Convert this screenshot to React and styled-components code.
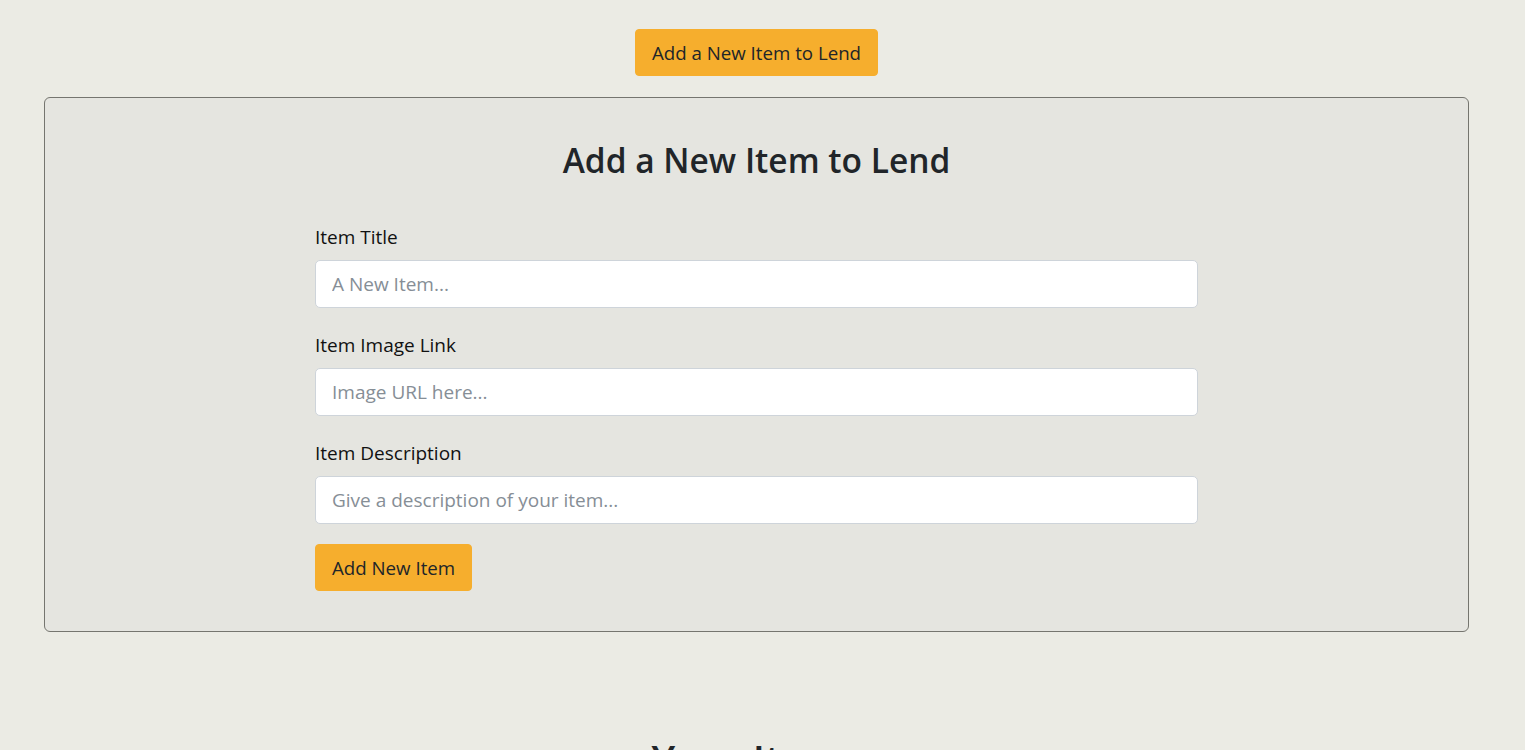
import React from 'react'
import styled, { createGlobalStyle } from 'styled-components'

const GlobalStyle = createGlobalStyle`
  * { box-sizing: border-box; }
  body {
    margin: 0;
    background-color: #ebebe4;
    color: #212529;
    font-family: "Segoe UI", "Open Sans", "Liberation Sans", sans-serif;
  }
`

const Page = styled.div`
  display: flex;
  flex-direction: column;
  align-items: center;
  padding: 29px 56px 0 44px;
`

const OrangeButton = styled.button`
  background-color: #f6ae2d;
  border: 1px solid #f6ae2d;
  border-radius: 4px;
  color: #212529;
  font-family: inherit;
  font-size: 18.7px;
  line-height: 29px;
  padding: 8px 16px;
  cursor: pointer;
  align-self: ${props => (props.left ? 'flex-start' : 'center')};
`

const Card = styled.div`
  width: 100%;
  margin-top: 21px;
  background-color: #e5e5e0;
  border: 1px solid #75756f;
  border-radius: 6px;
  padding: 42px 0 40px;
  display: flex;
  flex-direction: column;
  align-items: center;
`

const CardTitle = styled.h2`
  margin: 0 0 42px;
  font-size: 33.5px;
  font-weight: 600;
  line-height: 40px;
`

const Form = styled.form`
  width: 883px;
  display: flex;
  flex-direction: column;
`

const Field = styled.div`
  display: flex;
  flex-direction: column;
  margin-bottom: 22px;
  &:nth-child(3) {
    margin-bottom: 20px;
  }
`

const Label = styled.label`
  font-size: 19px;
  line-height: 30px;
  margin-bottom: 8px;
  color: #111;
`

const Input = styled.input`
  height: 48px;
  background: #fff;
  border: 1px solid #ced4da;
  border-radius: 5px;
  padding: 8px 16px;
  font-family: inherit;
  font-size: 19px;
  color: #212529;
  &::placeholder {
    color: #868e96;
  }
`

const SectionTitle = styled.h1`
  margin: 104px 0 0;
  font-size: 40px;
  font-weight: 600;
  line-height: 48px;
`

const fields = [
  { label: 'Item Title', placeholder: 'A New Item...' },
  { label: 'Item Image Link', placeholder: 'Image URL here...' },
  { label: 'Item Description', placeholder: 'Give a description of your item...' },
]

function App() {
  return (
    <Page>
      <GlobalStyle />
      <OrangeButton>Add a New Item to Lend</OrangeButton>
      <Card>
        <CardTitle>Add a New Item to Lend</CardTitle>
        <Form onSubmit={e => e.preventDefault()}>
          {fields.map((f, i) => (
            <Field key={i}>
              <Label>{f.label}</Label>
              <Input placeholder={f.placeholder} />
            </Field>
          ))}
          <OrangeButton left type="submit">Add New Item</OrangeButton>
        </Form>
      </Card>
      <SectionTitle>Your Items</SectionTitle>
    </Page>
  )
}

export default App
